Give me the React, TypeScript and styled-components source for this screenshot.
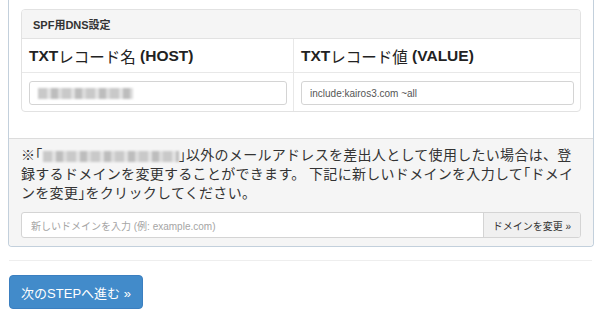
import React from 'react'
import styled, { createGlobalStyle } from 'styled-components'

const GlobalStyle = createGlobalStyle`
  body {
    margin: 0;
    background: #fff;
    font-family: 'Liberation Sans', 'Noto Sans CJK JP', sans-serif;
    color: #333;
  }
`

const Page = styled.div`
  padding: 0 6px 0 8px;
`

const OuterPanel = styled.div`
  border: 1px solid #c3d0dc;
  border-top: none;
  border-radius: 0 0 4px 4px;
  background: #fff;
`

const PanelBody = styled.div`
  padding: 9px 12px 12px;
`

const InnerPanel = styled.div`
  border: 1px solid #e2e2e2;
  border-radius: 4px;
  margin-bottom: 14px;
  overflow: hidden;
`

const InnerHeading = styled.div`
  background: #f5f5f5;
  border-bottom: 1px solid #e2e2e2;
  height: 28px;
  padding: 0 11px;
  display: flex;
  align-items: center;
  font-size: 11px;
  font-weight: bold;
  color: #333;
`

const Grid = styled.div`
  display: grid;
  grid-template-columns: 272px 1fr;
`

const HeadCell = styled.div<{ $first?: boolean }>`
  height: 33px;
  padding: 0 7px;
  display: flex;
  align-items: center;
  border-bottom: 1px solid #e8e8e8;
  border-right: ${(p) => (p.$first ? '1px solid #e8e8e8' : 'none')};
  font-size: 15.5px;
  color: #222;
`

const Bold = styled.b`
  font-weight: bold;
`

const ValueCell = styled.div<{ $first?: boolean }>`
  padding: 8px 6px 6px 7px;
  border-right: ${(p) => (p.$first ? '1px solid #e8e8e8' : 'none')};
`

const TextBox = styled.div`
  height: 24px;
  border: 1px solid #d4d4d4;
  border-radius: 3px;
  box-sizing: border-box;
  padding: 0 8px;
  display: flex;
  align-items: center;
  font-size: 10px;
  color: #555;
  background: #fff;
`

const Blur = styled.span<{ $w: number }>`
  display: inline-block;
  width: ${(p) => p.$w}px;
  height: 11px;
  vertical-align: middle;
  background: repeating-linear-gradient(
    90deg,
    #c9c9c9 0 9px,
    #e2e2e2 9px 13px,
    #bdbdbd 13px 20px,
    #dcdcdc 20px 24px
  );
  filter: blur(1.2px);
`

const Footer = styled.div`
  background: #f5f5f5;
  border-top: 1px solid #dcdcdc;
  padding: 6px 12px 8px;
  border-radius: 0 0 4px 4px;
`

const Note = styled.p`
  margin: 0 0 10px;
  font-size: 14px;
  line-height: 19px;
  letter-spacing: 0.3px;
  color: #333;
  font-family: 'Noto Sans CJK JP', 'Liberation Sans', sans-serif;
`

const Bracket = styled.span`
  font-feature-settings: 'halt';
`

const InputGroup = styled.div`
  display: flex;
  height: 24px;
  border: 1px solid #d4d4d4;
  border-radius: 3px;
  background: #fff;
  overflow: hidden;
`

const GroupInput = styled.div`
  flex: 1;
  display: flex;
  align-items: center;
  padding: 0 9px;
  font-size: 10px;
  color: #a5a5a5;
`

const GroupButton = styled.div`
  width: 96px;
  display: flex;
  align-items: center;
  justify-content: center;
  background: #f0f0f0;
  border-left: 1px solid #d4d4d4;
  font-size: 10px;
  color: #333;
`

const Rule = styled.hr`
  margin: 13px 2px 14px 1px;
  border: none;
  border-top: 1px solid #eeeeee;
`

const PrimaryButton = styled.button`
  margin-left: 1px;
  width: 134px;
  height: 34px;
  border: 1px solid #3b7fc0;
  border-radius: 4px;
  background: #428bca;
  color: #fff;
  font-size: 13px;
  font-family: 'Liberation Sans', 'Noto Sans CJK JP', sans-serif;
  padding: 0;
`

const App: React.FC = () => {
  return (
    <Page>
      <GlobalStyle />
      <OuterPanel>
        <PanelBody>
          <InnerPanel>
            <InnerHeading>SPF用DNS設定</InnerHeading>
            <Grid>
              <HeadCell $first>
                <Bold>TXT</Bold>レコード名&nbsp;<Bold>(HOST)</Bold>
              </HeadCell>
              <HeadCell>
                <Bold>TXT</Bold>レコード値&nbsp;<Bold>(VALUE)</Bold>
              </HeadCell>
              <ValueCell $first>
                <TextBox>
                  <Blur $w={95} />
                </TextBox>
              </ValueCell>
              <ValueCell>
                <TextBox>include:kairos3.com ~all</TextBox>
              </ValueCell>
            </Grid>
          </InnerPanel>
        </PanelBody>
        <Footer>
          <Note>
            ※<Bracket>「</Bracket>
            <Blur $w={136} />
            <Bracket>」</Bracket>以外のメールアドレスを差出人として使用したい場合は、登録するドメインを変更することができます。 下記に新しいドメインを入力して<Bracket>「</Bracket>ドメインを変更<Bracket>」</Bracket>をクリックしてください。
          </Note>
          <InputGroup>
            <GroupInput>新しいドメインを入力 (例: example.com)</GroupInput>
            <GroupButton>ドメインを変更 »</GroupButton>
          </InputGroup>
        </Footer>
      </OuterPanel>
      <Rule />
      <PrimaryButton>次のSTEPへ進む »</PrimaryButton>
    </Page>
  )
}

export default App
